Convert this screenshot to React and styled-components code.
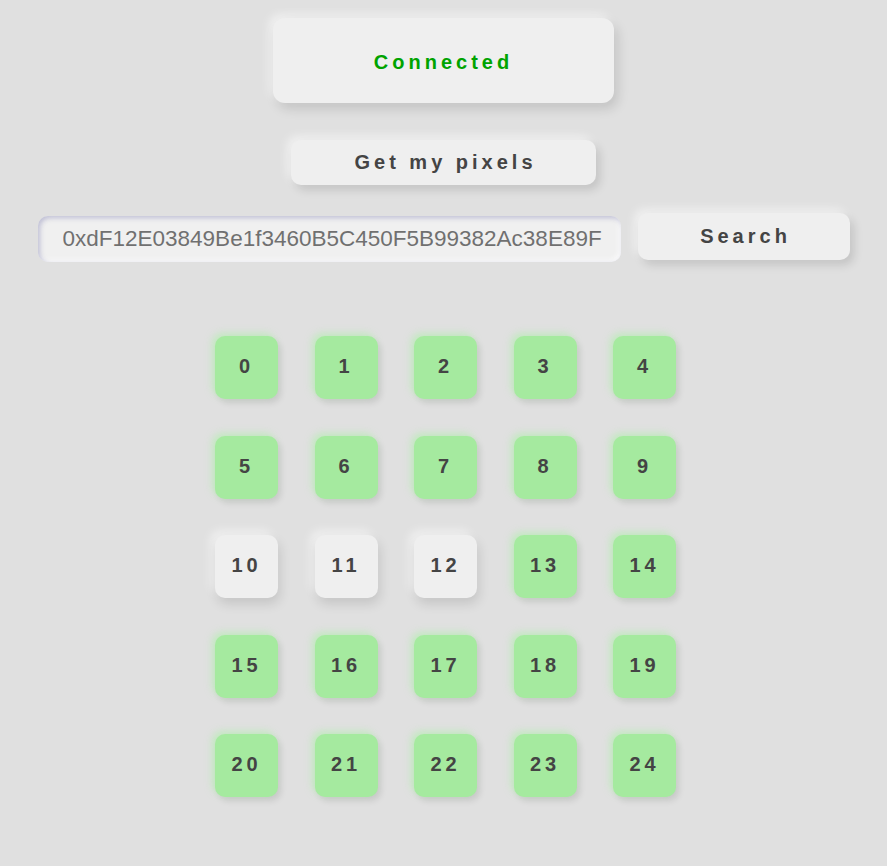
import React from "react";
import styled, { createGlobalStyle } from "styled-components";

const Global = createGlobalStyle`
  html, body { background: #e0e0e0; }
  body { margin: 8px; font-family: "Liberation Sans", Arial, sans-serif; }
`;

const Page = styled.div`
  display: flex;
  flex-direction: column;
  align-items: center;
  padding-top: 10px;
  padding-bottom: 60px;
`;

const Status = styled.div`
  width: 341px;
  height: 85px;
  box-sizing: border-box;
  padding: 3px 0 0 0;
  border-radius: 12px;
  background: #efefef;
  box-shadow: 4px 6px 12px rgba(0, 0, 0, 0.13), -4px -4px 10px rgba(255, 255, 255, 0.55);
  display: flex;
  align-items: center;
  justify-content: center;
  color: #00a300;
  font-size: 20px;
  font-weight: bold;
  letter-spacing: 4px;
`;

const Button = styled.button`
  width: ${(p) => p.$w}px;
  height: ${(p) => p.$h}px;
  border: none;
  border-radius: 10px;
  background: #efefef;
  box-shadow: 4px 5px 10px rgba(0, 0, 0, 0.13), -4px -4px 10px rgba(255, 255, 255, 0.55);
  font-family: "Liberation Sans", Arial, sans-serif;
  font-size: 20px;
  font-weight: bold;
  letter-spacing: 4px;
  color: #444;
  padding: 0 0 0 4px;
  cursor: pointer;
`;

const GetButton = styled(Button)`
  margin-top: 37px;
`;

const SearchRow = styled.div`
  margin-top: 28px;
  display: flex;
  align-items: flex-start;
  gap: 17px;
`;

const Input = styled.input`
  width: 583px;
  height: 46px;
  margin-top: 3px;
  box-sizing: border-box;
  border: none;
  outline: none;
  border-radius: 10px;
  background: #f0f0f0;
  box-shadow: inset 2px 2px 5px rgba(150, 150, 190, 0.55), inset -2px -2px 5px rgba(255, 255, 255, 0.8);
  font-family: "Liberation Sans", Arial, sans-serif;
  font-size: 22.5px;
  color: #707070;
  text-align: left;
  padding: 0 0 0 25px;
`;

const Grid = styled.div`
  margin-top: 74px;
  margin-left: 4px;
  display: grid;
  grid-template-columns: repeat(5, 63px);
  grid-auto-rows: 63px;
  gap: 36.5px;
`;

const Cell = styled.div`
  border-radius: 10px;
  display: flex;
  align-items: center;
  justify-content: center;
  font-size: 20px;
  font-weight: bold;
  letter-spacing: 4px;
  color: #444;
  padding-bottom: 2px;
  box-sizing: border-box;
  background: ${(p) => (p.$owned ? "#a5ea9f" : "#efefef")};
  box-shadow: ${(p) =>
    p.$owned
      ? "-3px -3px 7px rgba(170, 240, 165, 0.55), 3px 4px 6px rgba(0, 0, 0, 0.1)"
      : "2px 6px 12px rgba(0, 0, 0, 0.12), -5px -5px 10px rgba(255, 255, 255, 0.5)"};
`;

const free = new Set([10, 11, 12]);

export default function App() {
  return (
    <>
      <Global />
      <Page>
        <Status>Connected</Status>
        <GetButton $w={305} $h={45}>Get my pixels</GetButton>
        <SearchRow>
          <Input defaultValue="0xdF12E03849Be1f3460B5C450F5B99382Ac38E89F" />
          <Button $w={212} $h={47}>Search</Button>
        </SearchRow>
        <Grid>
          {Array.from({ length: 25 }, (_, i) => (
            <Cell key={i} $owned={!free.has(i)}>
              {i}
            </Cell>
          ))}
        </Grid>
      </Page>
    </>
  );
}
